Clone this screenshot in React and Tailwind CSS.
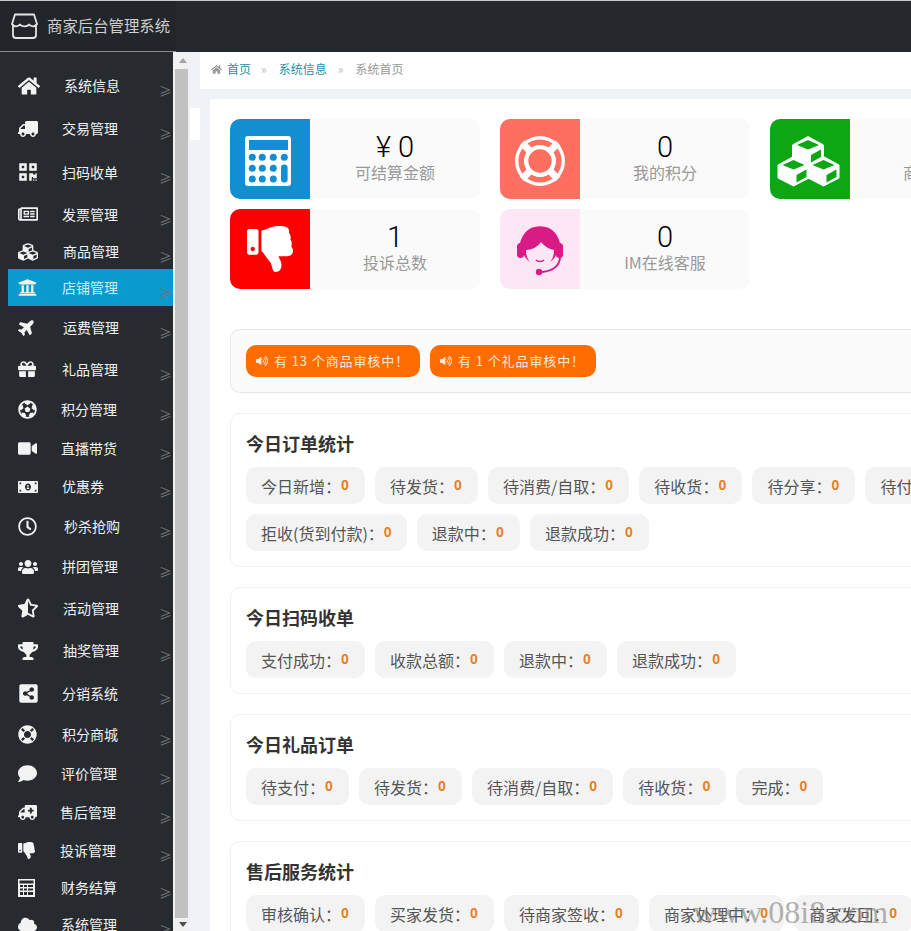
import React from 'react';
import {
  FaHome, FaTruck, FaQrcode, FaRegNewspaper, FaCubes, FaUniversity, FaPlane, FaGift, FaFutbol, FaVideo,
  FaMoneyBillAlt, FaRegClock, FaUsers, FaStarHalfAlt, FaTrophy, FaShareAltSquare, FaLifeRing, FaComment,
  FaAmbulance, FaThumbsDown, FaCloud, FaVolumeUp,
} from 'react-icons/fa';

const GridCalc = ({ className }) => (
  <svg viewBox="0 0 17 18" width="17" height="18" className={className}>
    <path fill="#f3f3f3" fillRule="evenodd" d="M0 0h17v18H0zM1.5 1.5v3h14v-3zM2 6v2h3V6zm4 0v2h3V6zm4 0v2h5V6zM2 9.5v2h3v-2zm4 0v2h3v-2zm4 0v2h5v-2zM2 13v3h3v-3zm4 0v3h3v-3zm4 0v3h5v-3z" />
  </svg>
);

const menu = [
  { t: '系统信息', I: FaHome, s: 22, h: 'h-[43px]', m: 'ml-[6px]' },
  { t: '交易管理', I: FaTruck, s: 20, h: 'h-[43px]', m: 'ml-[4px]', f: '-scale-x-100' },
  { t: '扫码收单', I: FaQrcode, s: 20, h: 'h-[44px]', m: 'ml-[4px]' },
  { t: '发票管理', I: FaRegNewspaper, s: 20, h: 'h-[40px]', m: 'ml-[4px]' },
  { t: '商品管理', I: FaCubes, s: 20, h: 'h-[35px]', m: 'ml-[5px]' },
  { t: '店铺管理', I: FaUniversity, s: 19, h: 'h-[37px]', m: 'ml-[4px]', active: true },
  { t: '运费管理', I: FaPlane, s: 18, h: 'h-[42px]', m: 'ml-[5px]', f: '-rotate-45' },
  { t: '礼品管理', I: FaGift, s: 18, h: 'h-[42px]', m: 'ml-[4px]' },
  { t: '积分管理', I: FaFutbol, s: 19, h: 'h-[39px]', m: 'ml-[3px]' },
  { t: '直播带货', I: FaVideo, s: 19, h: 'h-[38px]', m: 'ml-[3px]' },
  { t: '优惠券', I: FaMoneyBillAlt, s: 20, h: 'h-[39px]', m: 'ml-[4px]' },
  { t: '秒杀抢购', I: FaRegClock, s: 19, h: 'h-[40px]', m: 'ml-[6px]' },
  { t: '拼团管理', I: FaUsers, s: 20, h: 'h-[41px]', m: 'ml-[4px]' },
  { t: '活动管理', I: FaStarHalfAlt, s: 20, h: 'h-[42px]', m: 'ml-[5px]' },
  { t: '抽奖管理', I: FaTrophy, s: 20, h: 'h-[43px]', m: 'ml-[5px]' },
  { t: '分销系统', I: FaShareAltSquare, s: 21, h: 'h-[42px]', m: 'ml-[4px]' },
  { t: '积分商城', I: FaLifeRing, s: 19, h: 'h-[40px]', m: 'ml-[4px]' },
  { t: '评价管理', I: FaComment, s: 19, h: 'h-[39px]', m: 'ml-[3px]' },
  { t: '售后管理', I: FaAmbulance, s: 19, h: 'h-[38px]', m: 'ml-[2px]', f: '-scale-x-100' },
  { t: '投诉管理', I: FaThumbsDown, s: 17, h: 'h-[38px]', m: 'ml-[2px]' },
  { t: '财务结算', I: GridCalc, s: 17, h: 'h-[37px]', m: 'ml-[3px]' },
  { t: '系统管理', I: FaCloud, s: 19, h: 'h-[37px]', m: 'ml-[3px]' },
];

const CalcIcon = () => (
  <svg viewBox="0 0 80 80" className="w-[80px] h-[80px]">
    <rect x="15" y="17" width="46" height="50" rx="3" fill="#fff" />
    <rect x="19" y="21" width="39" height="10" fill="#138fd1" />
    {[22.3, 32.3, 43.3, 54.3].map((x) =>
      [38.3, 49.3, 60].map((y) =>
        x > 50 && y > 40 ? null : <circle key={x + '-' + y} cx={x} cy={y} r="3.5" fill="#138fd1" />
      )
    )}
    <rect x="51" y="45.5" width="6.6" height="18" rx="3.3" fill="#138fd1" />
  </svg>
);

const RingIcon = () => (
  <svg viewBox="0 0 80 80" className="w-[80px] h-[80px]">
    <circle cx="40" cy="42" r="25" fill="#fff" />
    <circle cx="40" cy="42" r="18.800" fill="none" stroke="#ff6f61" strokeWidth="5.600" />
    <path d="M22 24L58 60M58 24L22 60" stroke="#fff" strokeWidth="7" />
    <circle cx="40" cy="42" r="15.500" fill="#fff" />
    <circle cx="40" cy="42" r="11.700" fill="#ff6f61" />
  </svg>
);

const Cube = ({ x, y }) => (
  <g transform={`translate(${x} ${y})`}>
    <path d="M0-8.500L15.500 0V13L0 21L-15.500 13V0Z" fill="#fff" stroke="#fff" strokeWidth="1" strokeLinejoin="round" />
    <path d="M0-5L11 0L0 4.500L-11 0Z" fill="#0ca713" />
    <path d="M3 10L13 4.500V12L3 17.500Z" fill="#0ca713" />
  </g>
);

const CubesIcon = () => (
  <svg viewBox="0 0 80 80" className="w-[80px] h-[80px]">
    <Cube x={38} y={26} />
    <Cube x={23.500} y={46} />
    <Cube x={53.500} y={46} />
  </svg>
);

const ThumbIcon = () => (
  <div className="w-[80px] h-[80px] flex items-center justify-center">
    <FaThumbsDown size={46} color="#fff" />
  </div>
);

const ServiceIcon = () => (
  <svg viewBox="0 0 80 80" className="w-[80px] h-[80px]">
    <path d="M21 42C21 27 29 19 40 19S59 27 59 42" fill="none" stroke="#d81b85" strokeWidth="3.500" />
    <circle cx="40" cy="38" r="18" fill="#d81b85" />
    <path d="M26 41C33 41 38 37 41 33C44 37 49 40 54 41C54 52 47 58 40 58S26 52 26 41Z" fill="#fde6f6" />
    <rect x="17" y="34" width="7" height="15" rx="3.500" fill="#d81b85" />
    <rect x="56" y="34" width="7" height="15" rx="3.500" fill="#d81b85" />
    <path d="M60 49C59 58 52 62 42 63" fill="none" stroke="#d81b85" strokeWidth="2" />
    <circle cx="39" cy="63" r="3.200" fill="#d81b85" />
    <path d="M36 51C38 53 42 53 44 51" fill="none" stroke="#d81b85" strokeWidth="1.600" />
  </svg>
);

const stats = [
  { n: '¥ 0', l: '可结算金额', c: 'bg-[#138fd1]', I: CalcIcon },
  { n: '0', l: '我的积分', c: 'bg-[#ff6f61]', I: RingIcon },
  { n: '0', l: '商品总数', c: 'bg-[#0ca713]', I: CubesIcon },
  { n: '1', l: '投诉总数', c: 'bg-[#ff0000]', I: ThumbIcon },
  { n: '0', l: 'IM在线客服', c: 'bg-[#fde6f6]', I: ServiceIcon },
];

const sections = [
  { t: '今日订单统计', p: ['今日新增', '待发货', '待消费/自取', '待收货', '待分享', '待付款', '拒收(货到付款)', '退款中', '退款成功'] },
  { t: '今日扫码收单', p: ['支付成功', '收款总额', '退款中', '退款成功'] },
  { t: '今日礼品订单', p: ['待支付', '待发货', '待消费/自取', '待收货', '完成'] },
  { t: '售后服务统计', p: ['审核确认', '买家发货', '待商家签收', '商家处理中', '商家发回'] },
];

const Sidebar = () => (
  <nav className="w-[173px] shrink-0 bg-[#272b30] pt-[12px] overflow-hidden">
    {menu.map(({ t, I, s, h, m, f, active }) => (
      <div key={t} className={`${h} flex items-center text-[14px] ${active ? 'ml-[8px] pl-[10px] bg-[#0a9acb] text-[#c9f1ff]' : 'pl-[18px] text-[#f0f0f0]'}`}>
        <span className="w-[40px] shrink-0 flex">
          <I size={s} color="#f3f3f3" className={f} />
        </span>
        <span className={m}>{t}</span>
        <span className="ml-auto mr-[1px] mt-[10px] text-[13px] leading-none text-[#6f7478]">≥</span>
      </div>
    ))}
  </nav>
);

const Scrollbar = () => (
  <div className="w-[17px] shrink-0 flex flex-col pl-[2px] bg-[#f1f1f1]">
    <div className="h-[17px] flex items-center justify-center">
      <div className="w-0 h-0 border-x-[4px] border-x-transparent border-b-[5px] border-b-[#a3a3a3]" />
    </div>
    <div className="h-[849px] w-[13px] bg-[#c1c1c1]" />
    <div className="flex-1 flex items-center justify-center">
      <div className="w-0 h-0 border-x-[4px] border-x-transparent border-t-[5px] border-t-[#505050]" />
    </div>
  </div>
);

const StatCard = ({ n, l, c, I }) => (
  <div className="w-[250px] h-[80px] flex rounded-[10px] bg-[#fafafa] overflow-hidden">
    <div className={`w-[80px] h-[80px] shrink-0 ${c}`}><I /></div>
    <div className="flex-1 flex flex-col items-center justify-center pb-[2px]">
      <div className="text-[29px] leading-[28px] font-light text-black font-['Roboto','Noto_Sans_CJK_SC',sans-serif]">{n}</div>
      <div className="text-[16px] leading-[22px] text-[#999]">{l}</div>
    </div>
  </div>
);

const Section = ({ t, p }) => (
  <section className="rounded-[10px] border border-[#f0f0f0] bg-white px-[15px] py-[15px]">
    <h3 className="h-[38px] text-[18px] leading-[28px] font-bold text-[#333]">{t}</h3>
    <div className="flex flex-wrap gap-[10px]">
      {p.map((x) => (
        <div key={x} className={`h-[37px] flex items-center pl-[15px] ${x.includes('(') ? 'pr-[14px]' : 'pr-[15px]'} rounded-[10px] bg-[#f3f3f3] text-[16px] text-[#555]`}>
          {x}：<span className="w-[9px] text-[14px] font-bold text-[#e67e22] font-['Liberation_Sans',sans-serif]">0</span>
        </div>
      ))}
    </div>
  </section>
);

const Notice = ({ children }) => (
  <div className="h-[32px] flex items-center gap-[6px] pl-[10px] pr-[11px] rounded-[10px] bg-[#ff6c00] text-[13px] text-[#ffe9d6] tracking-[0.9px]">
    <FaVolumeUp size={12} />
    <span>{children}</span>
  </div>
);

export default function App() {
  return (
    <div className="relative w-[911px] h-[931px] overflow-hidden flex flex-col bg-white font-['Noto_Sans_CJK_SC','Liberation_Sans',sans-serif]">
      <header className="h-[52px] shrink-0 flex border-t border-t-[#c9c9c9] bg-[#25292e]">
        <div className="w-[176px] flex items-center gap-[9px] pl-[11px] bg-[#22262b] border-b border-b-[#8a8d90]">
          <svg viewBox="0 0 27 26" width="27" height="26" fill="none" stroke="#e4e4e4" strokeWidth="1.800" strokeLinejoin="round" strokeLinecap="round">
            <path d="M2 12V22a3 3 0 0 0 3 3H22a3 3 0 0 0 3-3V12" />
            <path d="M4 1.500H23L26 11C24.500 14 20 14 18 11.500C16.500 14 11 14 9 11.500C7 14 2.500 14 1 11Z" />
          </svg>
          <span className="text-[15.4px] text-[#cfcfcf] whitespace-nowrap">商家后台管理系统</span>
        </div>
      </header>
      <div className="flex-1 flex min-h-0">
        <Sidebar />
        <Scrollbar />
        <main className="flex-1 min-w-0 flex bg-[#eff2f7] overflow-hidden">
          <div className="w-[10px] shrink-0 pt-[56px]">
            <div className="h-[32px] bg-white" />
          </div>
          <div className="flex-1 min-w-0">
            <div className="h-[37px] flex items-center pl-[11px] pb-[3px] bg-white text-[12px]">
              <FaHome size={11} color="#999" />
              <span className="ml-[5px] text-[#2a8ea8]">首页</span>
              <span className="ml-[10px] text-[#bbb]">»</span>
              <span className="ml-[12px] text-[#2a8ea8]">系统信息</span>
              <span className="ml-[11px] text-[#bbb]">»</span>
              <span className="ml-[12px] text-[#999]">系统首页</span>
            </div>
            <div className="mt-[10px] ml-[10px] w-[910px] bg-white p-[20px]">
              <div className="grid grid-cols-[250px_250px_250px] gap-x-[20px] gap-y-[10px]">
                {stats.map((s) => <StatCard key={s.l} {...s} />)}
              </div>
              <div className="mt-[40px] h-[64px] flex items-center gap-[10px] px-[15px] rounded-[10px] border border-[#e6e6e6] bg-[#fbfbfb]">
                <Notice>有 13 个商品审核中！</Notice>
                <Notice>有 1 个礼品审核中！</Notice>
              </div>
              <div className="mt-[20px] flex flex-col gap-[20px]">
                {sections.map((s) => <Section key={s.t} {...s} />)}
              </div>
            </div>
          </div>
        </main>
      </div>
      <div className="absolute left-[693px] top-[892px] text-[32px] leading-[40px] text-[#808080]/60 whitespace-nowrap font-['Liberation_Serif',serif]">www.08i8.com</div>
    </div>
  );
}
